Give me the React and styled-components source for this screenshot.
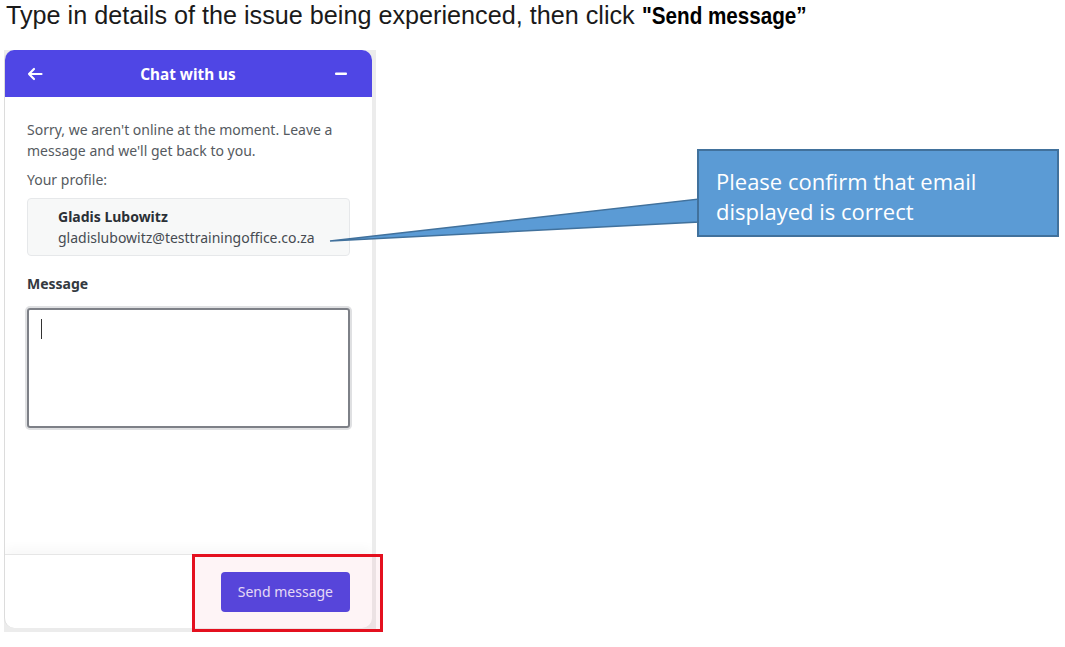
import React from 'react';
import styled, { createGlobalStyle } from 'styled-components';

const GlobalStyle = createGlobalStyle`
  html, body {
    margin: 0;
    padding: 0;
    background: #ffffff;
  }
`;

const Page = styled.div`
  position: relative;
  width: 1065px;
  height: 647px;
  overflow: hidden;
  background: #ffffff;
`;

const Instruction = styled.p`
  margin: 0;
  padding: 1px 0 0 6px;
  height: 50px;
  box-sizing: border-box;
  font-family: 'Liberation Sans', Arial, sans-serif;
  font-size: 25.2px;
  line-height: 29px;
  color: #1a1a1a;
  white-space: nowrap;
`;

const Strong = styled.b`
  display: inline-block;
  font-family: 'Liberation Sans', Arial, sans-serif;
  font-weight: 700;
  font-size: 24px;
  color: #000;
  transform: scaleX(0.86);
  transform-origin: left center;
`;

const Frame = styled.div`
  margin-left: 4px;
  width: 368px;
  padding: 0 4px 4px 0;
  background: #ececec;
`;

const Widget = styled.div`
  display: flex;
  flex-direction: column;
  height: 578px;
  background: #ffffff;
  border-left: 1px solid #dcdcdc;
  border-radius: 10px;
  overflow: hidden;
  font-family: 'Noto Sans', 'Open Sans', sans-serif;
`;

const Header = styled.div`
  display: flex;
  align-items: center;
  justify-content: space-between;
  height: 47px;
  padding: 0 22px 0 21px;
  background: #4f46e5;
  color: #ffffff;
`;

const IconButton = styled.span`
  display: flex;
  width: 18px;
  justify-content: center;
`;

const Title = styled.h2`
  margin: 0;
  font-size: 15.3px;
  font-weight: 700;
`;

const Body = styled.div`
  flex: 1;
  padding: 22px 22px 0 22px;
  font-size: 14px;
  color: #555a60;
`;

const Notice = styled.p`
  margin: 0 0 9px;
  line-height: 21px;
`;

const Label = styled.div`
  line-height: 20px;
  margin-bottom: ${p => (p.$strong ? '14px' : '8px')};
  color: ${p => (p.$strong ? '#333940' : '#555a60')};
  font-weight: ${p => (p.$strong ? 700 : 400)};
`;

const ProfileCard = styled.div`
  padding: 7px 10px 7px 30px;
  background: #f7f8f8;
  border: 1px solid #e6e8ea;
  border-radius: 4px;
  line-height: 21px;
  margin-bottom: 18px;
`;

const Name = styled.div`
  font-weight: 700;
  color: #2b3036;
`;

const Email = styled.div`
  color: #464b52;
`;

const TextArea = styled.div`
  position: relative;
  height: 116px;
  border: 2px solid #7d8087;
  border-radius: 3px;
  box-shadow: 0 0 0 2px #dfe0e2;
`;

const Caret = styled.span`
  position: absolute;
  left: 12px;
  top: 9px;
  width: 1px;
  height: 20px;
  background: #333;
`;

const Footer = styled.div`
  display: flex;
  justify-content: flex-end;
  align-items: center;
  height: 73px;
  padding: 0 22px;
  border-top: 1px solid #e6e6e6;
  box-shadow: 0 -6px 10px rgba(0, 0, 0, 0.03);
`;

const SendButton = styled.button`
  height: 40px;
  padding: 0 17px;
  border: none;
  border-radius: 4px;
  background: #5047e2;
  color: #e6e2ff;
  font-family: 'Noto Sans', 'Open Sans', sans-serif;
  font-size: 14px;
  cursor: pointer;
`;

const Highlight = styled.div`
  position: absolute;
  left: 192px;
  top: 554px;
  width: 185px;
  height: 72px;
  border: 3px solid #e4101f;
  background: rgba(230, 40, 70, 0.05);
  pointer-events: none;
`;

const Callout = styled.div`
  position: absolute;
  left: 697px;
  top: 149px;
  width: 362px;
  height: 88px;
  box-sizing: border-box;
  padding: 15px 17px;
  background: #5b9bd5;
  border: 2px solid #41719c;
  color: #ffffff;
  font-family: 'Open Sans', 'Noto Sans', sans-serif;
  font-size: 22px;
  line-height: 30px;
  white-space: nowrap;
`;

const Pointer = styled.svg`
  position: absolute;
  left: 0;
  top: 0;
  pointer-events: none;
`;

export default function App() {
  return (
    <Page>
      <GlobalStyle />
      <Instruction>
        Type in details of the issue being experienced, then click <Strong>"Send message”</Strong>
      </Instruction>
      <Frame>
        <Widget>
          <Header>
            <IconButton>
              <svg width="16" height="14" viewBox="0 0 16 14" fill="none" stroke="#fff" strokeWidth="2.2" strokeLinecap="round" strokeLinejoin="round">
                <path d="M14.5 7H2M7 2L2 7l5 5" />
              </svg>
            </IconButton>
            <Title>Chat with us</Title>
            <IconButton>
              <svg width="12" height="4" viewBox="0 0 12 4">
                <rect x="0" y="0.5" width="12" height="2.5" rx="1" fill="#fff" />
              </svg>
            </IconButton>
          </Header>
          <Body>
            <Notice>Sorry, we aren't online at the moment. Leave a message and we'll get back to you.</Notice>
            <Label>Your profile:</Label>
            <ProfileCard>
              <Name>Gladis Lubowitz</Name>
              <Email>gladislubowitz@testtrainingoffice.co.za</Email>
            </ProfileCard>
            <Label $strong>Message</Label>
            <TextArea>
              <Caret />
            </TextArea>
          </Body>
          <Footer>
            <SendButton>Send message</SendButton>
          </Footer>
        </Widget>
      </Frame>
      <Highlight />
      <Pointer width="1065" height="647">
        <polygon points="330,241 699,199 699,222" fill="#5b9bd5" stroke="#41719c" strokeWidth="1.5" strokeLinejoin="miter" />
      </Pointer>
      <Callout>
        Please confirm that email
        <br />
        displayed is correct
      </Callout>
    </Page>
  );
}
